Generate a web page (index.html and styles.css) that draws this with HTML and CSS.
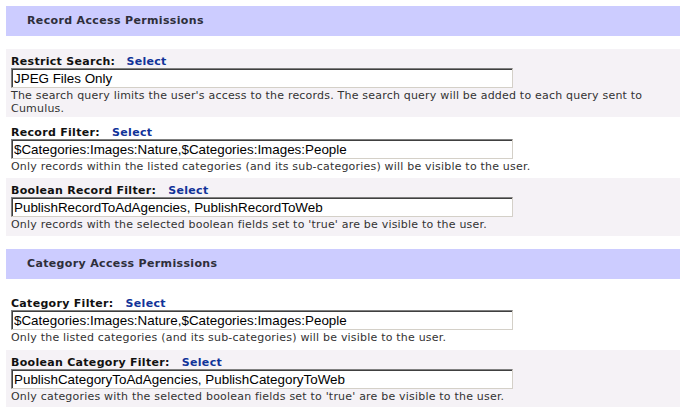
FILE: index.html
```html
<!DOCTYPE html>
<html lang="en">

<head>
   <meta charset="UTF-8">
   <title>Permissions</title>
   <link rel="stylesheet" href="styles.css">
</head>

<body>
   <div class="section-head">Record Access Permissions</div>

   <div class="field shaded first">
      <div class="field-label">Restrict Search: <a class="select-link wide" href="#">Select</a></div>
      <input class="field-input" type="text" value="JPEG Files Only">
      <div class="field-help">The search query limits the user's access to the records. The search query will be added to each query sent to<br>Cumulus.</div>
   </div>

   <div class="field plain">
      <div class="field-label">Record Filter: <a class="select-link" href="#">Select</a></div>
      <input class="field-input" type="text" value="$Categories:Images:Nature,$Categories:Images:People">
      <div class="field-help">Only records within the listed categories (and its sub-categories) will be visible to the user.</div>
   </div>

   <div class="field shaded">
      <div class="field-label">Boolean Record Filter: <a class="select-link" href="#">Select</a></div>
      <input class="field-input" type="text" value="PublishRecordToAdAgencies, PublishRecordToWeb">
      <div class="field-help">Only records with the selected boolean fields set to 'true' are be visible to the user.</div>
   </div>

   <div class="section-head second">Category Access Permissions</div>

   <div class="field top">
      <div class="field-label">Category Filter: <a class="select-link" href="#">Select</a></div>
      <input class="field-input" type="text" value="$Categories:Images:Nature,$Categories:Images:People">
      <div class="field-help">Only the listed categories (and its sub-categories) will be visible to the user.</div>
   </div>

   <div class="field shaded last">
      <div class="field-label">Boolean Category Filter: <a class="select-link" href="#">Select</a></div>
      <input class="field-input" type="text" value="PublishCategoryToAdAgencies, PublishCategoryToWeb">
      <div class="field-help">Only categories with the selected boolean fields set to 'true' are be visible to the user.</div>
   </div>
</body>

</html>
```

FILE: styles.css
```css
      body {
         margin: 6px;
         font-family: 'DejaVu Sans', Verdana, sans-serif;
         background-color: #fff;
         color: #222;
      }

      /* Lilac section header bar */
      .section-head {
         height: 30px;
         line-height: 30px;
         padding-left: 21px;
         background-color: #ccccff;
         color: #2e2e3a;
         font-size: 11px;
         font-weight: bold;
         letter-spacing: 0.35px;
         margin-bottom: 13px;
      }

      .section-head.second {
         margin-top: 13px;
      }

      .field {
         padding: 6px 5px 5px;
      }

      .field.shaded {
         background-color: #f5f2f6;
      }

      .field.first {
         padding-bottom: 2px;
      }

      .field.plain {
         padding-top: 9px;
      }

      .field.top {
         padding-top: 5px;
         padding-bottom: 6px;
      }

      .field.last {
         padding-bottom: 4px;
      }

      .field-label {
         font-size: 11px;
         font-weight: bold;
         line-height: 13px;
         letter-spacing: 0.3px;
         color: #111;
      }

      .select-link {
         margin-left: 8px;
         color: #113399;
         text-decoration: none;
      }

      .select-link.wide {
         margin-left: 7px;
      }

      .field-input {
         display: block;
         box-sizing: border-box;
         width: 502px;
         height: 20px;
         margin: 0;
         padding: 0 2px;
         border: 1px solid;
         border-color: #808080 #d4d0c8 #d4d0c8 #808080;
         box-shadow: inset 1px 1px 0 #404040;
         background-color: #fff;
         font-family: 'Liberation Sans', Arial, sans-serif;
         font-size: 13.4px;
         color: #000;
         outline: none;
      }

      .field-help {
         margin-top: 1px;
         font-size: 11px;
         line-height: 13px;
         letter-spacing: 0.2px;
         color: #333;
         white-space: nowrap;
      }
```
